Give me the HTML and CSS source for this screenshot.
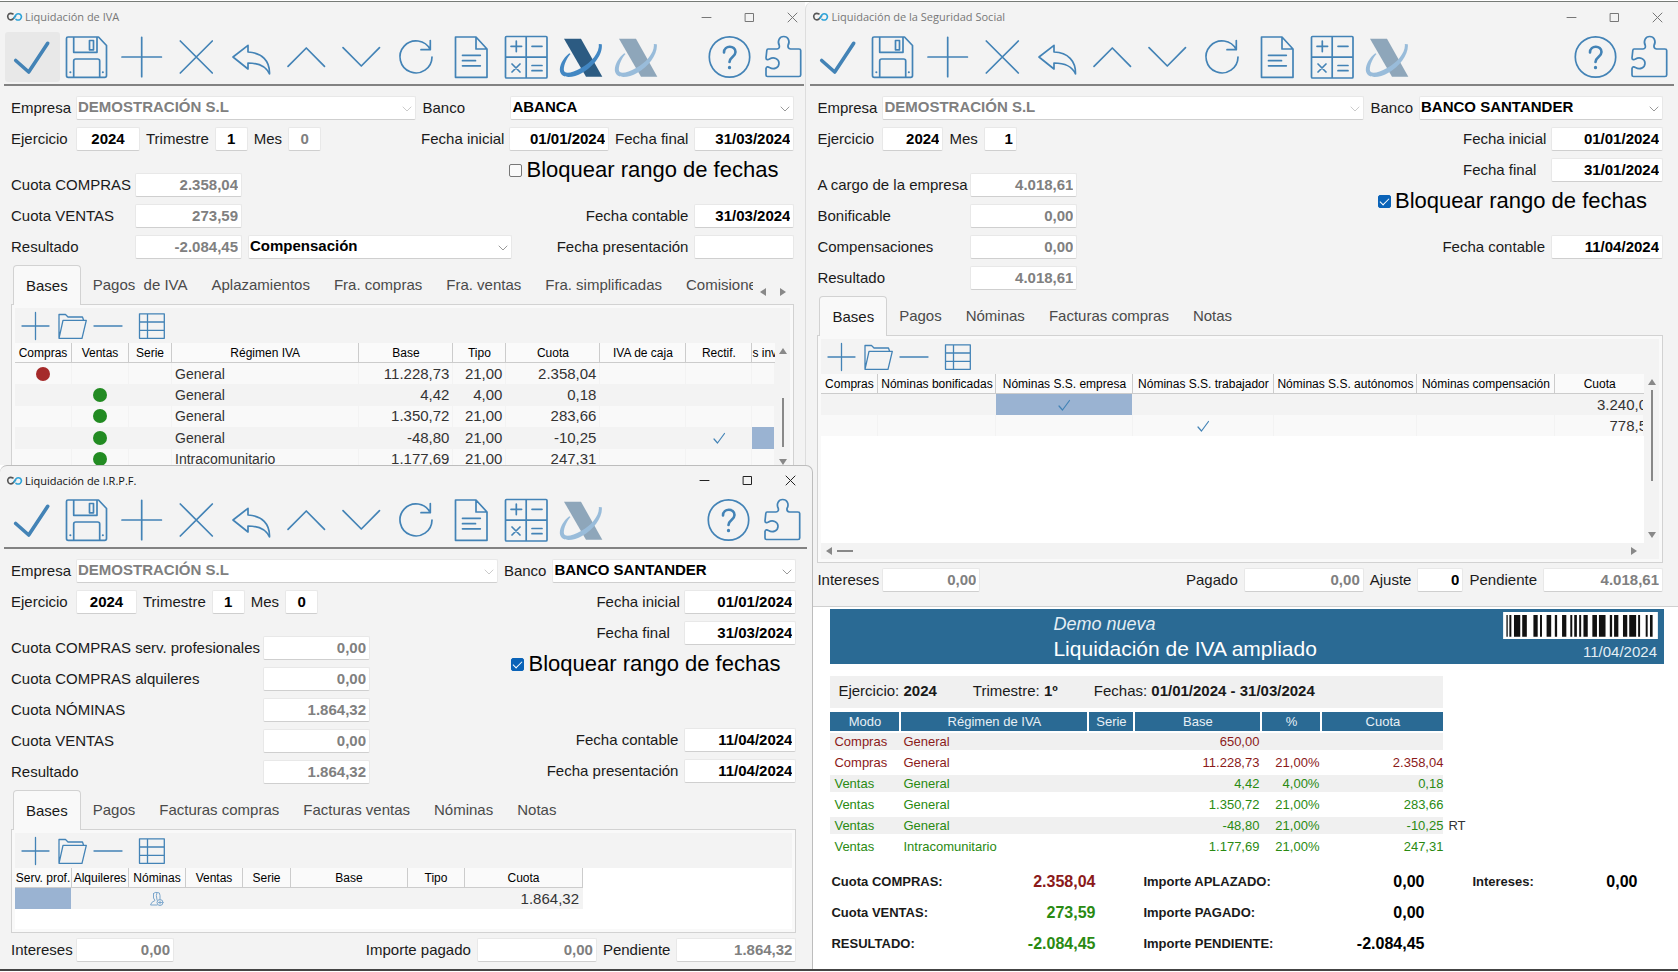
FILE: index.html
```html
<!DOCTYPE html>
<html lang="es">
<head>
<meta charset="utf-8">
<title>Liquidaciones</title>
<link rel="stylesheet" href="styles.css">
</head>
<body>
<svg class="sprite" aria-hidden="true">
  <symbol id="i-check" viewBox="0 0 55 50"><path d="M10.7 28.5 23.7 40 42.7 11.3" stroke-width="3.6"/></symbol>
  <symbol id="i-save" viewBox="0 0 55 50"><path d="M8 5H38.500L46.500 13.500V43.500Q46.500 45.300 44.700 45.300H8.200Q6.500 45.300 6.500 43.500V6.500Q6.500 5 8 5ZM13.700 5V20.300H37V5M29.500 8.500H33.500V17.800H29.500ZM13.700 45.300V29Q13.700 27 15.700 27H37.700Q39.700 27 39.700 29V45.300"/><path d="M10.300 40.300h.1M42.800 40.300h.1" stroke-width="2"/></symbol>
  <symbol id="i-plus" viewBox="0 0 55 50"><path d="M7 25H46.400M26.700 5.300V44.700"/></symbol>
  <symbol id="i-x" viewBox="0 0 55 50"><path d="M10.300 9 42.300 41M42.300 9 10.300 41"/></symbol>
  <symbol id="i-undo" viewBox="0 0 55 50"><path d="M8 25 23 13.300V20C37 20.500 45 29 44.500 42C41 34 34 31 23 31V37Z"/></symbol>
  <symbol id="i-up" viewBox="0 0 55 50"><path d="M8 34.300 26.300 16 44.500 34.300"/></symbol>
  <symbol id="i-down" viewBox="0 0 55 50"><path d="M8 15.700 26.300 34 44.500 15.700"/></symbol>
  <symbol id="i-refresh" viewBox="0 0 55 50"><path d="M42 25A16 16 0 1 1 40.300 17.700M40.300 8.500V17.700H31"/></symbol>
  <symbol id="i-doc" viewBox="0 0 55 50"><path d="M10.500 5H31L42 17V45.300H10.500ZM31 5V17H42M17.500 23.300H35.300M17.500 28.700H30.500M17.500 33.800H35.300"/></symbol>
  <symbol id="i-calc" viewBox="0 0 55 50"><path d="M6.500 4.500H46Q47 4.500 47 5.500V45Q47 46 46 46H6.500Q5.500 46 5.500 45V5.500Q5.500 4.500 6.500 4.500ZM26.200 4.500V46M5.500 25.200H47M11 14.300H21.600M16.300 9V19.600M32 14.300H42M12 32 20 40M20 32 12 40M32 33.500H42M32 38.700H42"/></symbol>
  <symbol id="i-x-logo" viewBox="0 0 55 50"><path d="M9 6.700H26L47.300 44.700H31Z" fill="#2c5b82" stroke="none"/><path d="M14.300 21.300C8 26 4 34 5 39.500C7 47 18 46 27 41C39 34.500 48 22 46.800 12.300L43.800 12C45 20 36 31 26 36C17 41 9 43 8.800 37.500C9 32 12 26 15.500 22Z" fill="#4287c3" stroke="none"/></symbol>
  <symbol id="i-help" viewBox="0 0 55 50"><circle cx="27.500" cy="25" r="20.200"/><path d="M22 20.500C22 13 33.500 13 33.500 20C33.500 25 27.500 25 27.500 30" stroke-width="2.600"/><path d="M27.500 35.300v.4" stroke-width="3.200"/></symbol>
  <symbol id="i-puzzle" viewBox="0 0 47 50"><path d="M11 17H20Q23 16.500 22.300 13.500C20 9 22.500 4.500 26.700 4.500C31 4.500 33.500 9 31 13.500Q30.500 16.500 33.500 17H42Q43.700 17 43.700 18.500V43Q43.700 44.500 42 44.500H10.500Q9 44.500 9 43V36.500C9.500 34.500 11 34.500 12.500 35.500C16.500 38 22 36 22 31.300C22 26.500 16.500 24.500 12.500 27C11 28 9 28 9 26L9.800 18.500Q10 17 11 17Z"/></symbol>
  <symbol id="s-plus" viewBox="0 0 32 32"><path d="M2 16H29M15.500 2.500V29.500"/></symbol>
  <symbol id="s-folder" viewBox="0 0 32 32"><path d="M3 28.300V4.500H9.500L12 7H26.500L27.500 10M3 28.300 7 10.300H30.300L26 28.300Z"/></symbol>
  <symbol id="s-minus" viewBox="0 0 32 32"><path d="M2 16H30"/></symbol>
  <symbol id="s-grid" viewBox="0 0 32 32"><path d="M3.500 3.800H28.300V28.300H3.500ZM3.500 12H28.300M3.500 20.300H28.300M11.500 3.800V28.300"/></symbol>
  <symbol id="s-tick" viewBox="0 0 14 14"><path d="M2 8 5.500 12 12.500 2.500"/></symbol>
  <symbol id="s-person" viewBox="0 0 16 16"><path d="M4.500 2.500Q6 .8 8.500 1.500Q11 1 11 4.500V8M4.500 2.500V7L6 9.500Q2 11 1.500 14H8M8 1.500Q6.500 4 8 9"/><circle cx="11" cy="11.500" r="3"/><path d="M9.500 11.500H12.500M11 10V13"/></symbol>
  <symbol id="s-chev" viewBox="0 0 10 6"><path d="M1 1 5 5 9 1" stroke="#999"/></symbol>
  <symbol id="s-logo" viewBox="0 0 17 10"><path d="M7 2Q4.500 .8 2.800 2Q.8 4 2.500 6.700Q4.500 8.800 7 7L9.500 4" stroke="#555" stroke-width="1.6"/><path d="M8 6 10 2.800Q12 .8 14.500 2.500Q16.500 5 14.300 7.300Q12 8.800 10 7.300" stroke="#2ea3d8" stroke-width="1.6"/></symbol>
  <symbol id="w-min" viewBox="0 0 11 11"><path d="M1 5.500H10"/></symbol>
  <symbol id="w-max" viewBox="0 0 11 11"><path d="M1.500 1.500H9.500V9.500H1.500Z"/></symbol>
  <symbol id="w-close" viewBox="0 0 11 11"><path d="M1 1 10 10M10 1 1 10"/></symbol>
  <symbol id="a-up" viewBox="0 0 8 6"><path d="M0 6 4 0 8 6Z"/></symbol>
  <symbol id="a-down" viewBox="0 0 8 6"><path d="M0 0 4 6 8 0Z"/></symbol>
  <symbol id="a-left" viewBox="0 0 6 8"><path d="M6 0 0 4 6 8Z"/></symbol>
  <symbol id="a-right" viewBox="0 0 6 8"><path d="M0 0 6 4 0 8Z"/></symbol>
</svg>

<main class="desktop">
  <div class="column">
    <section class="window win-iva" aria-label="Liquidación de IVA">
      <header class="titlebar">
        <svg class="logo"><use href="#s-logo"/></svg><h2>Liquidación de IVA</h2>
        <button aria-label="Minimizar"><svg><use href="#w-min"/></svg></button>
        <button aria-label="Maximizar"><svg><use href="#w-max"/></svg></button>
        <button aria-label="Cerrar"><svg><use href="#w-close"/></svg></button>
      </header>
      <nav class="toolbar">
        <button class="active" aria-label="Aceptar"><svg><use href="#i-check"/></svg></button>
        <button aria-label="Guardar"><svg><use href="#i-save"/></svg></button>
        <button aria-label="Nuevo"><svg><use href="#i-plus"/></svg></button>
        <button aria-label="Eliminar"><svg><use href="#i-x"/></svg></button>
        <button aria-label="Deshacer"><svg><use href="#i-undo"/></svg></button>
        <button aria-label="Anterior"><svg><use href="#i-up"/></svg></button>
        <button aria-label="Siguiente"><svg><use href="#i-down"/></svg></button>
        <button aria-label="Actualizar"><svg><use href="#i-refresh"/></svg></button>
        <button aria-label="Informe"><svg><use href="#i-doc"/></svg></button>
        <button aria-label="Calcular"><svg><use href="#i-calc"/></svg></button>
        <button aria-label="Contabilizar"><svg><use href="#i-x-logo"/></svg></button>
        <button class="faded" aria-label="Descontabilizar"><svg><use href="#i-x-logo"/></svg></button>
        <button class="push" aria-label="Ayuda"><svg><use href="#i-help"/></svg></button>
        <button class="narrow" aria-label="Complementos"><svg><use href="#i-puzzle"/></svg></button>
      </nav>
      <div class="content">
        <div class="row">
          <label class="l-main" for="a1">Empresa</label>
          <span class="combo grow off"><select id="a1" disabled><option>DEMOSTRACIÓN S.L</option></select><svg><use href="#s-chev"/></svg></span>
          <label class="l-date" for="a2">Banco</label>
          <span class="combo w284"><select id="a2"><option>ABANCA</option></select><svg><use href="#s-chev"/></svg></span>
        </div>
        <div class="row">
          <label class="l-main" for="a3">Ejercicio</label><input class="w64 mid" id="a3" value="2024">
          <label for="a4">Trimestre</label><input class="w33 mid" id="a4" value="1">
          <label for="a5">Mes</label><input class="w33 mid" id="a5" value="0" disabled>
          <label class="l-date push" for="a6">Fecha inicial</label><input class="w100" id="a6" value="01/01/2024">
          <label for="a7">Fecha final</label><input class="w100" id="a7" value="31/03/2024">
        </div>
        <div class="cols">
          <div class="stack sums l119">
            <div class="row"><label for="a8">Cuota COMPRAS</label><input class="w107" id="a8" value="2.358,04" disabled></div>
            <div class="row"><label for="a9">Cuota VENTAS</label><input class="w107" id="a9" value="273,59" disabled></div>
            <div class="row"><label for="a10">Resultado</label><input class="w107" id="a10" value="-2.084,45" disabled>
              <span class="combo w264"><select id="a11" aria-label="Tipo de resultado"><option>Compensación</option></select><svg><use href="#s-chev"/></svg></span></div>
          </div>
          <div class="stack dates">
            <label class="lock"><input type="checkbox">Bloquear rango de fechas</label>
            <div class="row space-s"><label for="a12">Fecha contable</label><input class="w100" id="a12" value="31/03/2024"></div>
            <div class="row"><label for="a13">Fecha presentación</label><input class="w100" id="a13" value=""></div>
          </div>
        </div>
        <div class="tabs">
          <div class="tablist" role="tablist">
            <button class="tab on" role="tab">Bases</button><button class="tab" role="tab">Pagos&nbsp; de IVA</button><button class="tab" role="tab">Aplazamientos</button><button class="tab" role="tab">Fra. compras</button><button class="tab" role="tab">Fra. ventas</button><button class="tab" role="tab">Fra. simplificadas</button><button class="tab" role="tab">Comisiones</button>
          </div>
          <div class="tabscroll"><button aria-label="Pestañas anteriores"><svg class="ah"><use href="#a-left"/></svg></button><button aria-label="Pestañas siguientes"><svg class="ah"><use href="#a-right"/></svg></button></div>
        </div>
        <div class="panel">
          <div class="minibar">
            <button aria-label="Añadir"><svg><use href="#s-plus"/></svg></button><button aria-label="Abrir"><svg><use href="#s-folder"/></svg></button><button aria-label="Quitar"><svg><use href="#s-minus"/></svg></button><button class="far" aria-label="Tabla"><svg><use href="#s-grid"/></svg></button>
          </div>
          <div class="list list-iva">
            <div class="view">
              <table class="grid rows5">
                <colgroup><col class="c57"><col class="c57"><col class="c43"><col><col class="c94"><col class="c53"><col class="c94"><col class="c86"><col class="c66"><col class="c23"></colgroup>
                <thead><tr><th>Compras</th><th>Ventas</th><th>Serie</th><th>Régimen IVA</th><th>Base</th><th>Tipo</th><th>Cuota</th><th>IVA de caja</th><th>Rectif.</th><th>s inv</th></tr></thead>
                <tbody>
                  <tr><td><i class="dot red"></i></td><td></td><td></td><td class="txt">General</td><td>11.228,73</td><td>21,00</td><td>2.358,04</td><td></td><td></td><td></td></tr>
                  <tr><td></td><td><i class="dot"></i></td><td></td><td class="txt">General</td><td>4,42</td><td>4,00</td><td>0,18</td><td></td><td></td><td></td></tr>
                  <tr><td></td><td><i class="dot"></i></td><td></td><td class="txt">General</td><td>1.350,72</td><td>21,00</td><td>283,66</td><td></td><td></td><td></td></tr>
                  <tr><td></td><td><i class="dot"></i></td><td></td><td class="txt">General</td><td>-48,80</td><td>21,00</td><td>-10,25</td><td></td><td><svg class="tick"><use href="#s-tick"/></svg></td><td class="sel"></td></tr>
                  <tr><td></td><td><i class="dot"></i></td><td></td><td class="txt">Intracomunitario</td><td>1.177,69</td><td>21,00</td><td>247,31</td><td></td><td></td><td></td></tr>
                </tbody>
              </table>
            </div>
            <div class="vscroll"><svg class="av"><use href="#a-up"/></svg><div class="track low"><i></i></div><svg class="av"><use href="#a-down"/></svg></div>
          </div>
        </div>
      </div>
    </section>

    <section class="window win-irpf" aria-label="Liquidación de I.R.P.F.">
      <header class="titlebar">
        <svg class="logo"><use href="#s-logo"/></svg><h2>Liquidación de I.R.P.F.</h2>
        <button aria-label="Minimizar"><svg><use href="#w-min"/></svg></button>
        <button aria-label="Maximizar"><svg><use href="#w-max"/></svg></button>
        <button aria-label="Cerrar"><svg><use href="#w-close"/></svg></button>
      </header>
      <nav class="toolbar">
        <button aria-label="Aceptar"><svg><use href="#i-check"/></svg></button>
        <button aria-label="Guardar"><svg><use href="#i-save"/></svg></button>
        <button aria-label="Nuevo"><svg><use href="#i-plus"/></svg></button>
        <button aria-label="Eliminar"><svg><use href="#i-x"/></svg></button>
        <button aria-label="Deshacer"><svg><use href="#i-undo"/></svg></button>
        <button aria-label="Anterior"><svg><use href="#i-up"/></svg></button>
        <button aria-label="Siguiente"><svg><use href="#i-down"/></svg></button>
        <button aria-label="Actualizar"><svg><use href="#i-refresh"/></svg></button>
        <button aria-label="Informe"><svg><use href="#i-doc"/></svg></button>
        <button aria-label="Calcular"><svg><use href="#i-calc"/></svg></button>
        <button class="faded" aria-label="Contabilizar"><svg><use href="#i-x-logo"/></svg></button>
        <button class="push" aria-label="Ayuda"><svg><use href="#i-help"/></svg></button>
        <button class="narrow" aria-label="Complementos"><svg><use href="#i-puzzle"/></svg></button>
      </nav>
      <div class="content">
        <div class="row">
          <label class="l-main" for="b1">Empresa</label>
          <span class="combo grow off"><select id="b1" disabled><option>DEMOSTRACIÓN S.L</option></select><svg><use href="#s-chev"/></svg></span>
          <label for="b2">Banco</label>
          <span class="combo w244"><select id="b2"><option>BANCO SANTANDER</option></select><svg><use href="#s-chev"/></svg></span>
        </div>
        <div class="row">
          <label class="l-main" for="b3">Ejercicio</label><input class="w61 mid" id="b3" value="2024">
          <label for="b4">Trimestre</label><input class="w33 mid" id="b4" value="1">
          <label for="b5">Mes</label><input class="w33 mid" id="b5" value="0">
          <label class="l-date push" for="b6">Fecha inicial</label><input class="w112" id="b6" value="01/01/2024">
        </div>
        <div class="cols">
          <div class="stack sums l248">
            <div class="row"><label for="b7">Cuota COMPRAS serv. profesionales</label><input class="w107" id="b7" value="0,00" disabled></div>
            <div class="row"><label for="b8">Cuota COMPRAS alquileres</label><input class="w107" id="b8" value="0,00" disabled></div>
            <div class="row"><label for="b9">Cuota NÓMINAS</label><input class="w107" id="b9" value="1.864,32" disabled></div>
            <div class="row"><label for="b10">Cuota VENTAS</label><input class="w107" id="b10" value="0,00" disabled></div>
            <div class="row"><label for="b11">Resultado</label><input class="w107" id="b11" value="1.864,32" disabled></div>
          </div>
          <div class="stack dates">
            <div class="row"><label class="l-date" for="b12">Fecha final</label><input class="w112" id="b12" value="31/03/2024"></div>
            <label class="lock"><input type="checkbox" checked>Bloquear rango de fechas</label>
            <div class="row space-l"><label for="b13">Fecha contable</label><input class="w112" id="b13" value="11/04/2024"></div>
            <div class="row"><label for="b14">Fecha presentación</label><input class="w112" id="b14" value="11/04/2024"></div>
          </div>
        </div>
        <div class="tabs">
          <div class="tablist" role="tablist">
            <button class="tab on" role="tab">Bases</button><button class="tab" role="tab">Pagos</button><button class="tab" role="tab">Facturas compras</button><button class="tab" role="tab">Facturas ventas</button><button class="tab" role="tab">Nóminas</button><button class="tab" role="tab">Notas</button>
          </div>
        </div>
        <div class="panel">
          <div class="minibar">
            <button aria-label="Añadir"><svg><use href="#s-plus"/></svg></button><button aria-label="Abrir"><svg><use href="#s-folder"/></svg></button><button aria-label="Quitar"><svg><use href="#s-minus"/></svg></button><button class="far" aria-label="Tabla"><svg><use href="#s-grid"/></svg></button>
          </div>
          <div class="list list-irpf">
            <div class="view">
              <table class="grid fit plain">
                <colgroup><col class="c57"><col class="c57"><col class="c57"><col class="c57"><col class="c48"><col class="c117"><col class="c57"><col class="c118"></colgroup>
                <thead><tr><th>Serv. prof.</th><th>Alquileres</th><th>Nóminas</th><th>Ventas</th><th>Serie</th><th>Base</th><th>Tipo</th><th>Cuota</th></tr></thead>
                <tbody><tr><td class="sel"></td><td></td><td><svg class="person"><use href="#s-person"/></svg></td><td></td><td></td><td></td><td></td><td>1.864,32</td></tr></tbody>
              </table>
            </div>
          </div>
        </div>
        <div class="row foot">
          <label class="l-main" for="b15">Intereses</label><input class="w98" id="b15" value="0,00" disabled>
          <label class="push" for="b16">Importe pagado</label><input class="w120" id="b16" value="0,00" disabled>
          <label for="b17">Pendiente</label><input class="w120" id="b17" value="1.864,32" disabled>
        </div>
      </div>
    </section>
  </div>

  <div class="column right">
    <section class="window win-ss" aria-label="Liquidación de la Seguridad Social">
      <header class="titlebar">
        <svg class="logo"><use href="#s-logo"/></svg><h2>Liquidación de la Seguridad Social</h2>
        <button aria-label="Minimizar"><svg><use href="#w-min"/></svg></button>
        <button aria-label="Maximizar"><svg><use href="#w-max"/></svg></button>
        <button aria-label="Cerrar"><svg><use href="#w-close"/></svg></button>
      </header>
      <nav class="toolbar">
        <button aria-label="Aceptar"><svg><use href="#i-check"/></svg></button>
        <button aria-label="Guardar"><svg><use href="#i-save"/></svg></button>
        <button aria-label="Nuevo"><svg><use href="#i-plus"/></svg></button>
        <button aria-label="Eliminar"><svg><use href="#i-x"/></svg></button>
        <button aria-label="Deshacer"><svg><use href="#i-undo"/></svg></button>
        <button aria-label="Anterior"><svg><use href="#i-up"/></svg></button>
        <button aria-label="Siguiente"><svg><use href="#i-down"/></svg></button>
        <button aria-label="Actualizar"><svg><use href="#i-refresh"/></svg></button>
        <button aria-label="Informe"><svg><use href="#i-doc"/></svg></button>
        <button aria-label="Calcular"><svg><use href="#i-calc"/></svg></button>
        <button class="faded" aria-label="Contabilizar"><svg><use href="#i-x-logo"/></svg></button>
        <button class="push" aria-label="Ayuda"><svg><use href="#i-help"/></svg></button>
        <button class="narrow" aria-label="Complementos"><svg><use href="#i-puzzle"/></svg></button>
      </nav>
      <div class="content">
        <div class="row">
          <label class="l-main" for="c1">Empresa</label>
          <span class="combo grow off"><select id="c1" disabled><option>DEMOSTRACIÓN S.L</option></select><svg><use href="#s-chev"/></svg></span>
          <label for="c2">Banco</label>
          <span class="combo w244"><select id="c2"><option>BANCO SANTANDER</option></select><svg><use href="#s-chev"/></svg></span>
        </div>
        <div class="row">
          <label class="l-main" for="c3">Ejercicio</label><input class="w61" id="c3" value="2024">
          <label for="c4">Mes</label><input class="w33" id="c4" value="1">
          <label class="l-date push" for="c5">Fecha inicial</label><input class="w112" id="c5" value="01/01/2024">
        </div>
        <div class="cols">
          <div class="stack sums l148">
            <div class="row"><label for="c6">A cargo de la empresa</label><input class="w107" id="c6" value="4.018,61" disabled></div>
            <div class="row"><label for="c7">Bonificable</label><input class="w107" id="c7" value="0,00" disabled></div>
            <div class="row"><label for="c8">Compensaciones</label><input class="w107" id="c8" value="0,00" disabled></div>
            <div class="row"><label for="c9">Resultado</label><input class="w107" id="c9" value="4.018,61" disabled></div>
          </div>
          <div class="stack dates">
            <div class="row"><label class="l-date" for="c10">Fecha final</label><input class="w112" id="c10" value="31/01/2024"></div>
            <label class="lock"><input type="checkbox" checked>Bloquear rango de fechas</label>
            <div class="row space-s"><label for="c11">Fecha contable</label><input class="w112" id="c11" value="11/04/2024"></div>
          </div>
        </div>
        <div class="tabs">
          <div class="tablist" role="tablist">
            <button class="tab on" role="tab">Bases</button><button class="tab" role="tab">Pagos</button><button class="tab" role="tab">Nóminas</button><button class="tab" role="tab">Facturas compras</button><button class="tab" role="tab">Notas</button>
          </div>
        </div>
        <div class="panel">
          <div class="minibar">
            <button aria-label="Añadir"><svg><use href="#s-plus"/></svg></button><button aria-label="Abrir"><svg><use href="#s-folder"/></svg></button><button aria-label="Quitar"><svg><use href="#s-minus"/></svg></button><button class="far" aria-label="Tabla"><svg><use href="#s-grid"/></svg></button>
          </div>
          <div class="list list-ss">
            <div class="view">
              <table class="grid plain">
                <colgroup><col class="c57"><col class="c118"><col class="c137"><col class="c141"><col class="c143"><col class="c138"><col></colgroup>
                <thead><tr><th>Compras</th><th>Nóminas bonificadas</th><th>Nóminas S.S. empresa</th><th>Nóminas S.S. trabajador</th><th>Nóminas S.S. autónomos</th><th>Nóminas compensación</th><th>Cuota</th></tr></thead>
                <tbody>
                  <tr><td></td><td></td><td class="sel"><svg class="tick"><use href="#s-tick"/></svg></td><td></td><td></td><td></td><td class="cut"><span>3.240,0</span></td></tr>
                  <tr><td></td><td></td><td></td><td><svg class="tick"><use href="#s-tick"/></svg></td><td></td><td></td><td class="cut"><span>778,5</span></td></tr>
                </tbody>
              </table>
            </div>
            <div class="vscroll"><svg class="av"><use href="#a-up"/></svg><div class="track"><i></i></div><svg class="av"><use href="#a-down"/></svg></div>
          </div>
          <div class="hscroll"><svg class="ah"><use href="#a-left"/></svg><i></i><svg class="ah push"><use href="#a-right"/></svg></div>
        </div>
        <div class="row foot">
          <label class="l-main" for="c12">Intereses</label><input class="w98" id="c12" value="0,00" disabled>
          <label class="push" for="c13">Pagado</label><input class="w120" id="c13" value="0,00" disabled>
          <label for="c14">Ajuste</label><input class="w46" id="c14" value="0">
          <label for="c15">Pendiente</label><input class="w120" id="c15" value="4.018,61" disabled>
        </div>
      </div>
    </section>

    <article class="report">
      <header class="banner">
        <div class="names"><em>Demo nueva</em><h1>Liquidación de IVA ampliado</h1></div>
        <div class="stamp">
          <svg class="barcode" viewBox="0 0 470 82" role="img" aria-label="Código de barras"><path fill="#fff" d="M0 0H470V82H0Z"/><path fill="#111" d="M10 9h4v66h-4zM19 9h6v66h-6zM33 9h19v66h-19zM58 9h14v66h-14zM92 9h13v66h-13zM112 9h6v66h-6zM132 9h14v66h-14zM157 9h7v66h-7zM179 9h13v66h-13zM204 9h6v66h-6zM216 9h8v66h-8zM231 9h6v66h-6zM244 9h13v66h-13zM271 9h14v66h-14zM291 9h20v66h-20zM324 9h7v66h-7zM337 9h13v66h-13zM364 9h13v66h-13zM383 9h21v66h-21zM410 9h6v66h-6zM433 9h6v66h-6zM446 9h8v66h-8z"/></svg>
          <time>11/04/2024</time>
        </div>
      </header>
      <div class="body">
        <p class="period"><span>Ejercicio: <b>2024</b></span><span>Trimestre: <b>1º</b></span><span>Fechas: <b>01/01/2024 - 31/03/2024</b></span></p>
        <table class="detail">
          <colgroup><col class="c71"><col class="c188"><col class="c46"><col class="c127"><col class="c60"><col><col class="c30"></colgroup>
          <thead><tr><th>Modo</th><th>Régimen de IVA</th><th>Serie</th><th>Base</th><th>%</th><th>Cuota</th><td></td></tr></thead>
          <tbody>
            <tr class="buy"><td>Compras</td><td>General</td><td></td><td>650,00</td><td></td><td></td><td></td></tr>
            <tr class="buy"><td>Compras</td><td>General</td><td></td><td>11.228,73</td><td>21,00%</td><td>2.358,04</td><td></td></tr>
            <tr><td>Ventas</td><td>General</td><td></td><td>4,42</td><td>4,00%</td><td>0,18</td><td></td></tr>
            <tr><td>Ventas</td><td>General</td><td></td><td>1.350,72</td><td>21,00%</td><td>283,66</td><td></td></tr>
            <tr><td>Ventas</td><td>General</td><td></td><td>-48,80</td><td>21,00%</td><td>-10,25</td><td>RT</td></tr>
            <tr><td>Ventas</td><td>Intracomunitario</td><td></td><td>1.177,69</td><td>21,00%</td><td>247,31</td><td></td></tr>
          </tbody>
        </table>
        <dl class="totals">
          <div><dt>Cuota COMPRAS:</dt><dd class="neg">2.358,04</dd></div>
          <div><dt>Importe APLAZADO:</dt><dd>0,00</dd></div>
          <div><dt>Intereses:</dt><dd>0,00</dd></div>
          <div class="first"><dt>Cuota VENTAS:</dt><dd class="pos">273,59</dd></div>
          <div><dt>Importe PAGADO:</dt><dd>0,00</dd></div>
          <div class="first"><dt>RESULTADO:</dt><dd class="pos">-2.084,45</dd></div>
          <div><dt>Importe PENDIENTE:</dt><dd>-2.084,45</dd></div>
        </dl>
      </div>
    </article>
  </div>
</main>
</body>
</html>
```

FILE: styles.css
```css
* { box-sizing: border-box; }
body {
  margin: 0;
  padding-top: 1px;
  background: #fff;
  color: #1a1a1a;
  font: 15px/20px "Liberation Sans", Arial, sans-serif;
}
h1, h2, p, dl, dd { margin: 0; }
h1, h2 { font-weight: normal; }
button, input, select { font: inherit; color: inherit; }
button { padding: 0; border: 0; background: none; display: block; flex: none; }
svg { display: block; fill: none; stroke: #4383b6; stroke-width: 1.7; stroke-linejoin: round; stroke-linecap: round; }
.sprite { position: absolute; width: 0; height: 0; }
.push { margin-left: auto; }

.desktop {
  display: grid;
  grid-template-columns: minmax(0, 48fr) minmax(0, 52fr);
  border-top: 1px solid #777b77;
  border-bottom: 2px solid #444;
}
.column { display: flex; flex-direction: column; min-width: 0; }
.right { background: #fff; }

/* Windows */
.window { background: #f3f3f3; }
.win-irpf {
  position: relative;
  z-index: 1;
  margin-right: -8px;
  border: 1px solid #bdbdbd;
  border-width: 1px 1px 0 0;
  border-radius: 7px 7px 0 0;
}
.win-ss {
  border-left: 1px solid #ddd;
  border-bottom: 1px solid #d0d0d0;
  border-radius: 7px 0 0 0;
  padding-bottom: 14px;
}
.titlebar { display: flex; align-items: center; gap: 32px; height: 30px; padding: 0 7px 0 6px; }
.titlebar h2 { flex: 1; margin-left: -30px; font: 11px/16px "Open Sans", "Noto Sans", sans-serif; color: #777; }
.titlebar svg { width: 11px; height: 11px; stroke: #777; stroke-width: 1; stroke-linejoin: miter; }
.titlebar .logo { width: 17px; height: 10px; }
.win-irpf .titlebar { height: 29px; padding-right: 16px; }
.win-irpf .titlebar h2 { color: #111; }
.win-irpf .titlebar svg { stroke: #222; }
.win-ss .titlebar { padding-right: 15px; }

.toolbar { display: flex; height: 54px; margin: 0 1px 0 4px; padding-left: 1px; border-bottom: 2px solid #828282; }
.toolbar button { width: 55px; height: 50px; border-radius: 3px; }
.toolbar .active { background: #e8e8e8; }
.toolbar svg { width: 55px; height: 50px; }
.toolbar .narrow, .toolbar .narrow svg { width: 47px; }
.faded { opacity: 0.5; }
.win-irpf .toolbar { margin-right: 5px; padding-right: 4px; }
.win-ss .toolbar { margin-right: 4px; padding-right: 4px; }

/* Forms */
.content { padding: 10px 11px 0 11px; }
.win-irpf .content { padding-right: 16px; padding-bottom: 7px; }
.win-ss .content { padding-right: 15px; }
.row { display: flex; align-items: center; gap: 6px; height: 24px; }
.row + .row { margin-top: 7px; }
.row label { white-space: nowrap; line-height: 22px; }
.l-main { width: 59px; flex: none; }
.l-date { width: 82px; flex: none; }
.row input, .combo select {
  height: 24px;
  margin: 0;
  padding: 0 3px 2px;
  border: 1px solid #e8e8e8;
  border-bottom-color: #cfcfcf;
  border-radius: 2px;
  background: #fff;
  color: #000;
  font-weight: bold;
  text-align: right;
  flex: none;
}
.row input.mid { text-align: center; }
.row input:disabled, .combo select:disabled { color: #808080; opacity: 1; }
.combo { position: relative; flex: none; }
.combo.grow { flex: 1; min-width: 0; }
.combo select { width: 100%; padding: 0 20px 2px 1px; appearance: none; text-align: left; display: block; }
.combo svg { position: absolute; right: 4px; top: 10px; width: 10px; height: 6px; stroke-width: 1; pointer-events: none; }
.combo.off svg { opacity: 0.5; }
.w33 { width: 33px; } .w46 { width: 46px; } .w61 { width: 61px; } .w64 { width: 64px; }
.w98 { width: 98px; } .w100 { width: 100px; } .w107 { width: 107px; } .w112 { width: 112px; }
.w120 { width: 120px; } .w244 { width: 244px; } .w264 { width: 264px; } .w284 { width: 284px; }

.cols { display: flex; justify-content: space-between; }
.sums { padding-top: 22px; }
.sums label { flex: none; }
.l119 label { width: 118px; } .l148 label { width: 147px; } .l248 label { width: 246px; }
.dates { display: flex; flex-direction: column; align-items: flex-end; padding-top: 7px; margin-left: -20px; }
.lock { display: flex; align-items: center; gap: 4px; height: 24px; margin-right: 16px; font-size: 22px; color: #000; white-space: nowrap; }
.row + .lock { margin-top: 7px; }
.lock input {
  appearance: none;
  display: grid;
  place-items: center;
  width: 13px;
  height: 13px;
  margin: 0;
  border: 1px solid #777;
  border-radius: 2px;
  background: #fafafa;
}
.lock input:checked { border-color: #0a63b8; background: #0a63b8; }
.lock input:checked::after { content: ""; width: 8px; height: 4px; margin-top: -2px; border: solid #fff; border-width: 0 0 1px 1px; transform: rotate(-45deg); }
.space-s { margin-top: 22px; }
.space-l { margin-top: 52px; }

/* Tabs */
.tabs { display: flex; height: 39px; margin-top: 6px; padding-left: 2px; }
.tablist { display: flex; flex: 0 1 auto; min-width: 0; overflow: hidden; height: 40px; position: relative; }
.tab { padding: 0 12px; height: 39px; color: #4a4a4a; white-space: nowrap; }
.tab.on { height: 40px; border: 1px solid #d2d2d2; border-bottom: 0; border-radius: 4px 4px 0 0; background: #f9f9f9; color: #1a1a1a; }
.tabscroll { display: flex; gap: 14px; flex: none; align-items: center; padding: 14px 8px 0 7px; }
.ah { width: 6px; height: 8px; } .av { width: 8px; height: 6px; }
.ah, .av { fill: #888; stroke: none; }
.panel { border: 1px solid #d2d2d2; padding: 3px; background: #f9f9f9; }
.minibar { display: flex; gap: 4px; height: 35px; padding: 1px 0 0 5px; background: #f3f3f3; }
.minibar .far { margin-left: 8px; }
.minibar svg { width: 32px; height: 32px; stroke-width: 1.3; }

/* Lists */
.list { display: flex; }
.win-iva .panel { border-bottom: 0; padding-bottom: 0; }
.list-iva { height: 122px; overflow: hidden; }
.list-irpf { height: 61px; }
.list-ss { height: 169px; }
.view { flex: 1; min-width: 0; overflow: hidden; background: #fff; }
.grid { width: 100%; table-layout: fixed; border-collapse: separate; border-spacing: 0; }
.grid.fit { width: 568px; }
.grid.rows5 { height: 127px; }
.grid th { height: 20px; padding: 0; overflow: hidden; border-right: 1px solid #ccc; border-bottom: 1px solid #ccc; background: #fafafa; color: #000; font-size: 12px; line-height: 18px; font-weight: normal; white-space: nowrap; }
.grid th:last-child { border-right: 0; }
.grid.fit th:last-child { border-right: 1px solid #ccc; }
.grid td { height: 21px; padding: 0 3px; overflow: hidden; border-right: 1px solid #f3f3f3; background: #f9f9f9; color: #333; line-height: 20px; text-align: right; white-space: nowrap; }
.grid td.txt { text-align: left; font-size: 14px; }
.grid tbody tr:nth-child(even) td, .plain tbody tr:nth-child(odd) td { background: #f3f3f3; }
.plain tbody tr:nth-child(even) td { background: #f9f9f9; }
.grid tbody tr td.sel { background: #9ab3d2; }
.grid td.cut { padding-right: 0; }
.cut span { margin-right: -4px; }
.dot { display: block; width: 14px; height: 14px; margin: 0 auto; border-radius: 50%; background: #228b22; }
.dot.red { background: #a52a2a; }
.tick { width: 14px; height: 14px; margin: 0 auto; stroke-width: 1.2; }
.person { width: 16px; height: 16px; margin: 0 auto; stroke: #7ba6cc; stroke-width: 1; }
.vscroll { display: flex; flex-direction: column; align-items: center; width: 15px; padding: 5px 0; background: #f3f3f3; }
.list-iva .vscroll { padding-bottom: 0; }
.track { flex: 1; padding-top: 5px; }
.track i { display: block; width: 2px; height: 91px; background: #888; }
.track.low { padding-top: 44px; }
.track.low i { height: 49px; }
.hscroll { display: flex; align-items: center; gap: 5px; height: 16px; padding: 0 22px 0 5px; background: #f3f3f3; }
.hscroll i { width: 16px; height: 2px; background: #888; }
.foot { margin-top: 5px; }
.c23 { width: 23px; } .c30 { width: 30px; } .c43 { width: 43px; } .c46 { width: 46px; } .c48 { width: 48px; } .c53 { width: 53px; }
.c57 { width: 57px; } .c60 { width: 60px; } .c66 { width: 66px; } .c71 { width: 71px; } .c86 { width: 86px; } .c94 { width: 94px; }
.c117 { width: 117px; } .c118 { width: 118px; } .c127 { width: 127px; } .c137 { width: 137px; } .c138 { width: 138px; }
.c141 { width: 141px; } .c143 { width: 143px; } .c188 { width: 188px; }

/* Report */
.report { padding: 2px 14px 0 25px; }
.banner { display: flex; justify-content: space-between; height: 55px; padding: 3px 5px 0 223px; background: #2a6a94; color: #fff; }
.names em { display: block; font-size: 18px; line-height: 24px; color: #e4eef5; }
.names h1 { font-size: 21px; line-height: 26px; }
.stamp { text-align: right; }
.barcode { width: 157px; height: 27px; stroke: none; }
.stamp time { display: block; padding-right: 2px; font-size: 15px; line-height: 25px; color: #e4eef5; }
.body { width: 77%; }
.period { display: flex; gap: 36px; width: 613px; height: 32px; margin: 12px 0 4px; padding-left: 8px; background: #f0f0f0; line-height: 30px; white-space: nowrap; }
.detail { width: 643px; table-layout: fixed; border-collapse: separate; border-spacing: 0; font-size: 13px; line-height: 17px; color: #2a8a12; }
.detail th { height: 19px; padding: 0; border-right: 2px solid #fff; background: #2a6a94; color: #e8f0f6; font-weight: normal; }
.detail td { height: 21px; padding: 0 0 0 4px; border: solid #fff; border-width: 2px 0; text-align: right; }
.detail thead td { height: 19px; }
.detail th:nth-child(6) { border-right: 0; }
.detail td:nth-child(-n+2) { text-align: left; }
.detail td:nth-child(2) { padding-left: 2px; }
.detail td:nth-child(4), .detail td:nth-child(5) { padding-right: 3px; }
.detail tbody tr:nth-child(odd) td { background: #f0f0f0; }
.detail tbody tr td:last-child { background: #fff; color: #333; text-align: left; padding-left: 5px; }
.detail .buy { color: #8b1a1a; }
.totals { display: grid; grid-template-columns: 264px 281px 165px; column-gap: 48px; row-gap: 7px; width: 809px; margin-top: 13px; padding-left: 1px; }
.totals div { display: flex; justify-content: space-between; align-items: center; height: 24px; font-weight: bold; }
.totals .first { grid-column: 1; }
.totals dt { font-size: 13px; white-space: nowrap; }
.totals dd { font-size: 16px; color: #000; }
.totals .neg { color: #8b1a1a; }
.totals .pos { color: #2a8a12; }
```
